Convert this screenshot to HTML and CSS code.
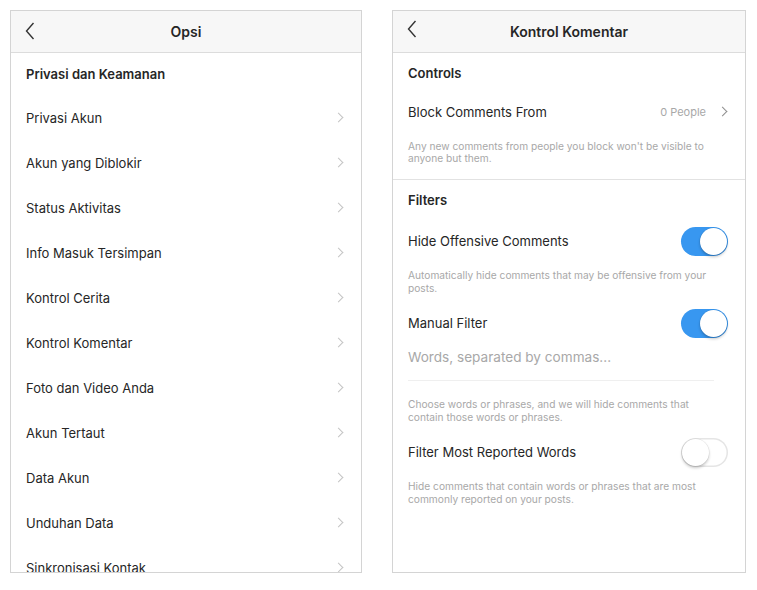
FILE: index.html
```html
<!DOCTYPE html>
<html lang="id">
<head>
  <meta charset="UTF-8" />
  <meta name="viewport" content="width=device-width, initial-scale=1.0" />
  <title>Opsi</title>
  <link rel="stylesheet" href="styles.css">
</head>
<body>
  <div class="screens">

    <div class="panel">
      <div class="topbar">
        <svg class="back" width="10" height="18" viewBox="0 0 10 18"><path d="M8.5 1 L1.5 9 L8.5 17" /></svg>
        <span class="title">Opsi</span>
      </div>
      <div class="list">
        <div class="heading">Privasi dan Keamanan</div>
        <div class="item">Privasi Akun<span class="chev"></span></div>
        <div class="item">Akun yang Diblokir<span class="chev"></span></div>
        <div class="item">Status Aktivitas<span class="chev"></span></div>
        <div class="item">Info Masuk Tersimpan<span class="chev"></span></div>
        <div class="item">Kontrol Cerita<span class="chev"></span></div>
        <div class="item">Kontrol Komentar<span class="chev"></span></div>
        <div class="item">Foto dan Video Anda<span class="chev"></span></div>
        <div class="item">Akun Tertaut<span class="chev"></span></div>
        <div class="item">Data Akun<span class="chev"></span></div>
        <div class="item">Unduhan Data<span class="chev"></span></div>
        <div class="item">Sinkronisasi Kontak<span class="chev"></span></div>
      </div>
    </div>

    <div class="panel">
      <div class="topbar">
        <svg class="back" width="10" height="18" viewBox="0 0 10 18"><path d="M8.5 1 L1.5 9 L8.5 17" /></svg>
        <span class="title">Kontrol Komentar</span>
      </div>
      <div class="group">
        <div class="group-title">Controls</div>
        <div class="row row-block">
          <span>Block Comments From</span>
          <span class="value">0 People<span class="chev dark"></span></span>
        </div>
        <p class="note note-first">Any new comments from people you block won't be visible to anyone but them.</p>
      </div>
      <div class="group">
        <div class="group-title filters">Filters</div>
        <div class="row row-toggle">
          <span>Hide Offensive Comments</span>
          <span class="switch on"></span>
        </div>
        <p class="note">Automatically hide comments that may be offensive from your posts.</p>
        <div class="row row-manual">
          <span>Manual Filter</span>
          <span class="switch on"></span>
        </div>
        <div class="words">Words, separated by commas...</div>
        <p class="note note-words">Choose words or phrases, and we will hide comments that contain those words or phrases.</p>
        <div class="row row-toggle">
          <span>Filter Most Reported Words</span>
          <span class="switch"></span>
        </div>
        <p class="note">Hide comments that contain words or phrases that are most commonly reported on your posts.</p>
      </div>
    </div>

  </div>
</body>
</html>
```

FILE: styles.css
```css
body {
  margin: 0;
  padding: 10px;
  background-color: #ffffff;
  font-family: Inter, "Liberation Sans", sans-serif;
  color: #262626;
}
.screens {
  display: flex;
  gap: 30px;
}
.panel {
  width: 350px;
  height: 561px;
  border: 1px solid #d4d4d4;
  overflow: hidden;
  background-color: #fff;
}
.panel + .panel {
  width: 352px;
}
.topbar {
  position: relative;
  height: 41px;
  background-color: #f7f7f7;
  border-bottom: 1px solid #dcdcdc;
  display: flex;
  align-items: center;
  justify-content: center;
}
.title {
  font-size: 14px;
  font-weight: 600;
  color: #262626;
}
.back {
  position: absolute;
  left: 14px;
  top: 11px;
  fill: none;
  stroke: #333;
  stroke-width: 1.4;
}
.panel + .panel .back {
  top: 9px;
}

/* left list */
.heading {
  height: 42px;
  padding: 0 15px;
  display: flex;
  align-items: center;
  font-size: 13px;
  font-weight: 600;
}
.item {
  height: 45px;
  padding: 0 15px;
  display: flex;
  align-items: center;
  justify-content: space-between;
  font-size: 13px;
}
.chev {
  width: 6px;
  height: 6px;
  border-top: 1.5px solid #c4c4c4;
  border-right: 1.5px solid #c4c4c4;
  transform: rotate(45deg);
  margin-right: 4px;
}
.chev.dark {
  border-color: #8e8e8e;
  margin-left: 13px;
  margin-right: 2px;
}

/* right settings */
.group {
  border-bottom: 1px solid #e2e2e2;
}
.group:last-child {
  border-bottom: none;
}
.group-title {
  height: 39px;
  padding: 0 15px;
  display: flex;
  align-items: center;
  font-size: 13px;
  font-weight: 600;
}
.group-title.filters {
  height: 40px;
}
.row {
  padding: 0 17px 0 15px;
  display: flex;
  align-items: center;
  justify-content: space-between;
  font-size: 13px;
}
.row-block {
  height: 39px;
}
.row-toggle {
  height: 42px;
}
.row-manual {
  height: 38px;
}
.value {
  display: flex;
  align-items: center;
  font-size: 11px;
  color: #a8a8a8;
}
.note {
  margin: 0;
  padding: 7px 36px 9px 15px;
  font-size: 10.2px;
  line-height: 13px;
  color: #a8a8a8;
}
.note-first {
  padding-top: 9px;
  padding-bottom: 15px;
  line-height: 12px;
}
.note-words {
  padding-top: 17px;
  padding-bottom: 7px;
}
.words {
  margin: 0 31px 0 15px;
  padding: 5px 0 13px;
  line-height: 20px;
  font-size: 13.6px;
  color: #a8a8a8;
  border-bottom: 1px solid #efefef;
}
.switch {
  position: relative;
  width: 47px;
  height: 29px;
  border-radius: 15px;
  background-color: #fff;
  box-shadow: inset 0 0 0 1.5px #e5e5e5;
}
.switch::after {
  content: "";
  position: absolute;
  top: 1px;
  left: 1px;
  width: 27px;
  height: 27px;
  border-radius: 50%;
  background-color: #fff;
  box-shadow: 0 2px 3px rgba(0, 0, 0, 0.22), 0 0 0 0.5px rgba(0, 0, 0, 0.08);
}
.switch.on {
  background-color: #3897f0;
  box-shadow: none;
}
.switch.on::after {
  left: 19px;
}
```
